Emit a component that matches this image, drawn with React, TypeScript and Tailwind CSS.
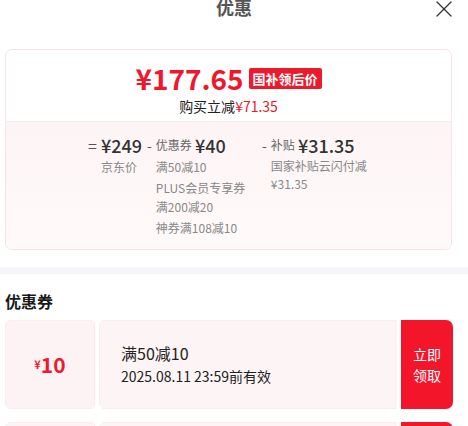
import { X } from 'lucide-react';

const font = { fontFamily: '"Noto Sans CJK SC", "Noto Sans", sans-serif' };

type Coupon = { amount: string; title: string; expire: string };

const coupons: Coupon[] = [
  { amount: '10', title: '满50减10', expire: '2025.08.11 23:59前有效' },
  { amount: '20', title: '满200减20', expire: '2025.08.11 23:59前有效' },
];

function CouponRow({ c }: { c: Coupon }) {
  return (
    <div className="relative flex h-[89px] gap-[4px]">
      <div className="flex w-[90px] items-center justify-center rounded-l-[6px] border border-[#fbeced] bg-[#fdf3f4] text-[#ee1a2e]">
        <span className="text-[11px] font-bold">¥</span>
        <span className="text-[21px] font-bold leading-none">{c.amount}</span>
      </div>
      <div className="flex flex-1 flex-col justify-center border border-r-0 border-[#fbeced] bg-[#fdf4f5] pl-[21px]">
        <div className="text-[16px] leading-[23px] text-[#222]">{c.title}</div>
        <div className="text-[14px] leading-[22px] text-[#222]">{c.expire}</div>
      </div>
      <button className="flex w-[52px] flex-col items-center justify-center rounded-r-[7px] bg-[#f3162b] text-[14px] leading-[21px] text-white">
        <span>立即</span>
        <span>领取</span>
      </button>
      <div className="absolute left-[89px] top-[-3px] h-[7px] w-[7px] rotate-45 bg-white" />
      <div className="absolute bottom-[-3px] left-[89px] h-[7px] w-[7px] rotate-45 bg-white" />
    </div>
  );
}

export default function App() {
  return (
    <div className="h-[426px] w-[468px] overflow-hidden bg-white" style={font}>
      <div className="relative flex h-[49px] flex-col">
        <div className="-mt-[5px] text-center text-[18px] font-bold leading-[24px] text-[#555]">优惠</div>
        <X className="absolute right-[10px] top-[-5px] h-[28px] w-[28px] text-[#333]" strokeWidth={1.1} />
      </div>

      <div className="ml-[5px] mr-[16px] overflow-hidden rounded-[7px] border border-[#f5e3e6]">
        <div className="flex h-[71px] flex-col items-center bg-white pt-[12px]">
          <div className="flex h-[33px] items-center gap-[5px]">
            <span className="text-[28px] font-bold leading-[33px] text-[#f0172c]">¥177.65</span>
            <span className="rounded-[2px] bg-[#ec1a2d] px-[4px] text-[13px] font-bold leading-[21px] text-white">
              国补领后价
            </span>
          </div>
          <div className="mt-[1px] text-[14px] leading-[20px] text-[#222]">
            购买立减<span className="text-[#e8192c]">¥71.35</span>
          </div>
        </div>

        <div className="flex border-t border-[#f8ecee] bg-gradient-to-b from-[#fdf4f5] to-[#fffafa] pb-[12px] pl-[82px] pt-[13px] text-[12px] leading-[19px] text-[#888]">
          <div className="flex w-[59px] gap-[4px]">
            <span className="text-[16px] leading-[20px] text-[#555]">=</span>
            <div className="flex flex-col gap-[2px]">
              <span className="text-[18px] font-medium leading-[20px] text-[#333]">¥249</span>
              <span>京东价</span>
            </div>
          </div>
          <div className="flex w-[115px] gap-[4px]">
            <span className="text-[14px] leading-[20px] text-[#555]">-</span>
            <div className="flex w-[100px] flex-col gap-[2px]">
              <div className="flex h-[20px] items-center gap-[3px]">
                <span className="text-[12px] leading-[20px] text-[#666]">优惠券</span>
                <span className="text-[18px] font-medium leading-[20px] text-[#333]">¥40</span>
              </div>
              <span>满50减10</span>
              <span>PLUS会员专享券满200减20</span>
              <span>神券满108减10</span>
            </div>
          </div>
          <div className="flex gap-[4px]">
            <span className="text-[14px] leading-[20px] text-[#555]">-</span>
            <div className="flex w-[98px] flex-col gap-[2px]">
              <div className="flex h-[20px] items-center gap-[3px]">
                <span className="text-[12px] leading-[20px] text-[#666]">补贴</span>
                <span className="text-[18px] font-medium leading-[20px] text-[#333]">¥31.35</span>
              </div>
              <span className="leading-[18px]">国家补贴云闪付减¥31.35</span>
            </div>
          </div>
        </div>
      </div>

      <div className="mt-[17px] h-[7px] bg-[#f4f6f9]" />

      <div className="px-[5px] pt-[15px]">
        <h2 className="text-[16px] font-bold leading-[24px] text-[#1a1a1a]">优惠券</h2>
        <div className="mt-[7px] flex w-[448px] flex-col gap-[13px]">
          {coupons.map((c, i) => (
            <CouponRow key={i} c={c} />
          ))}
        </div>
      </div>
    </div>
  );
}
